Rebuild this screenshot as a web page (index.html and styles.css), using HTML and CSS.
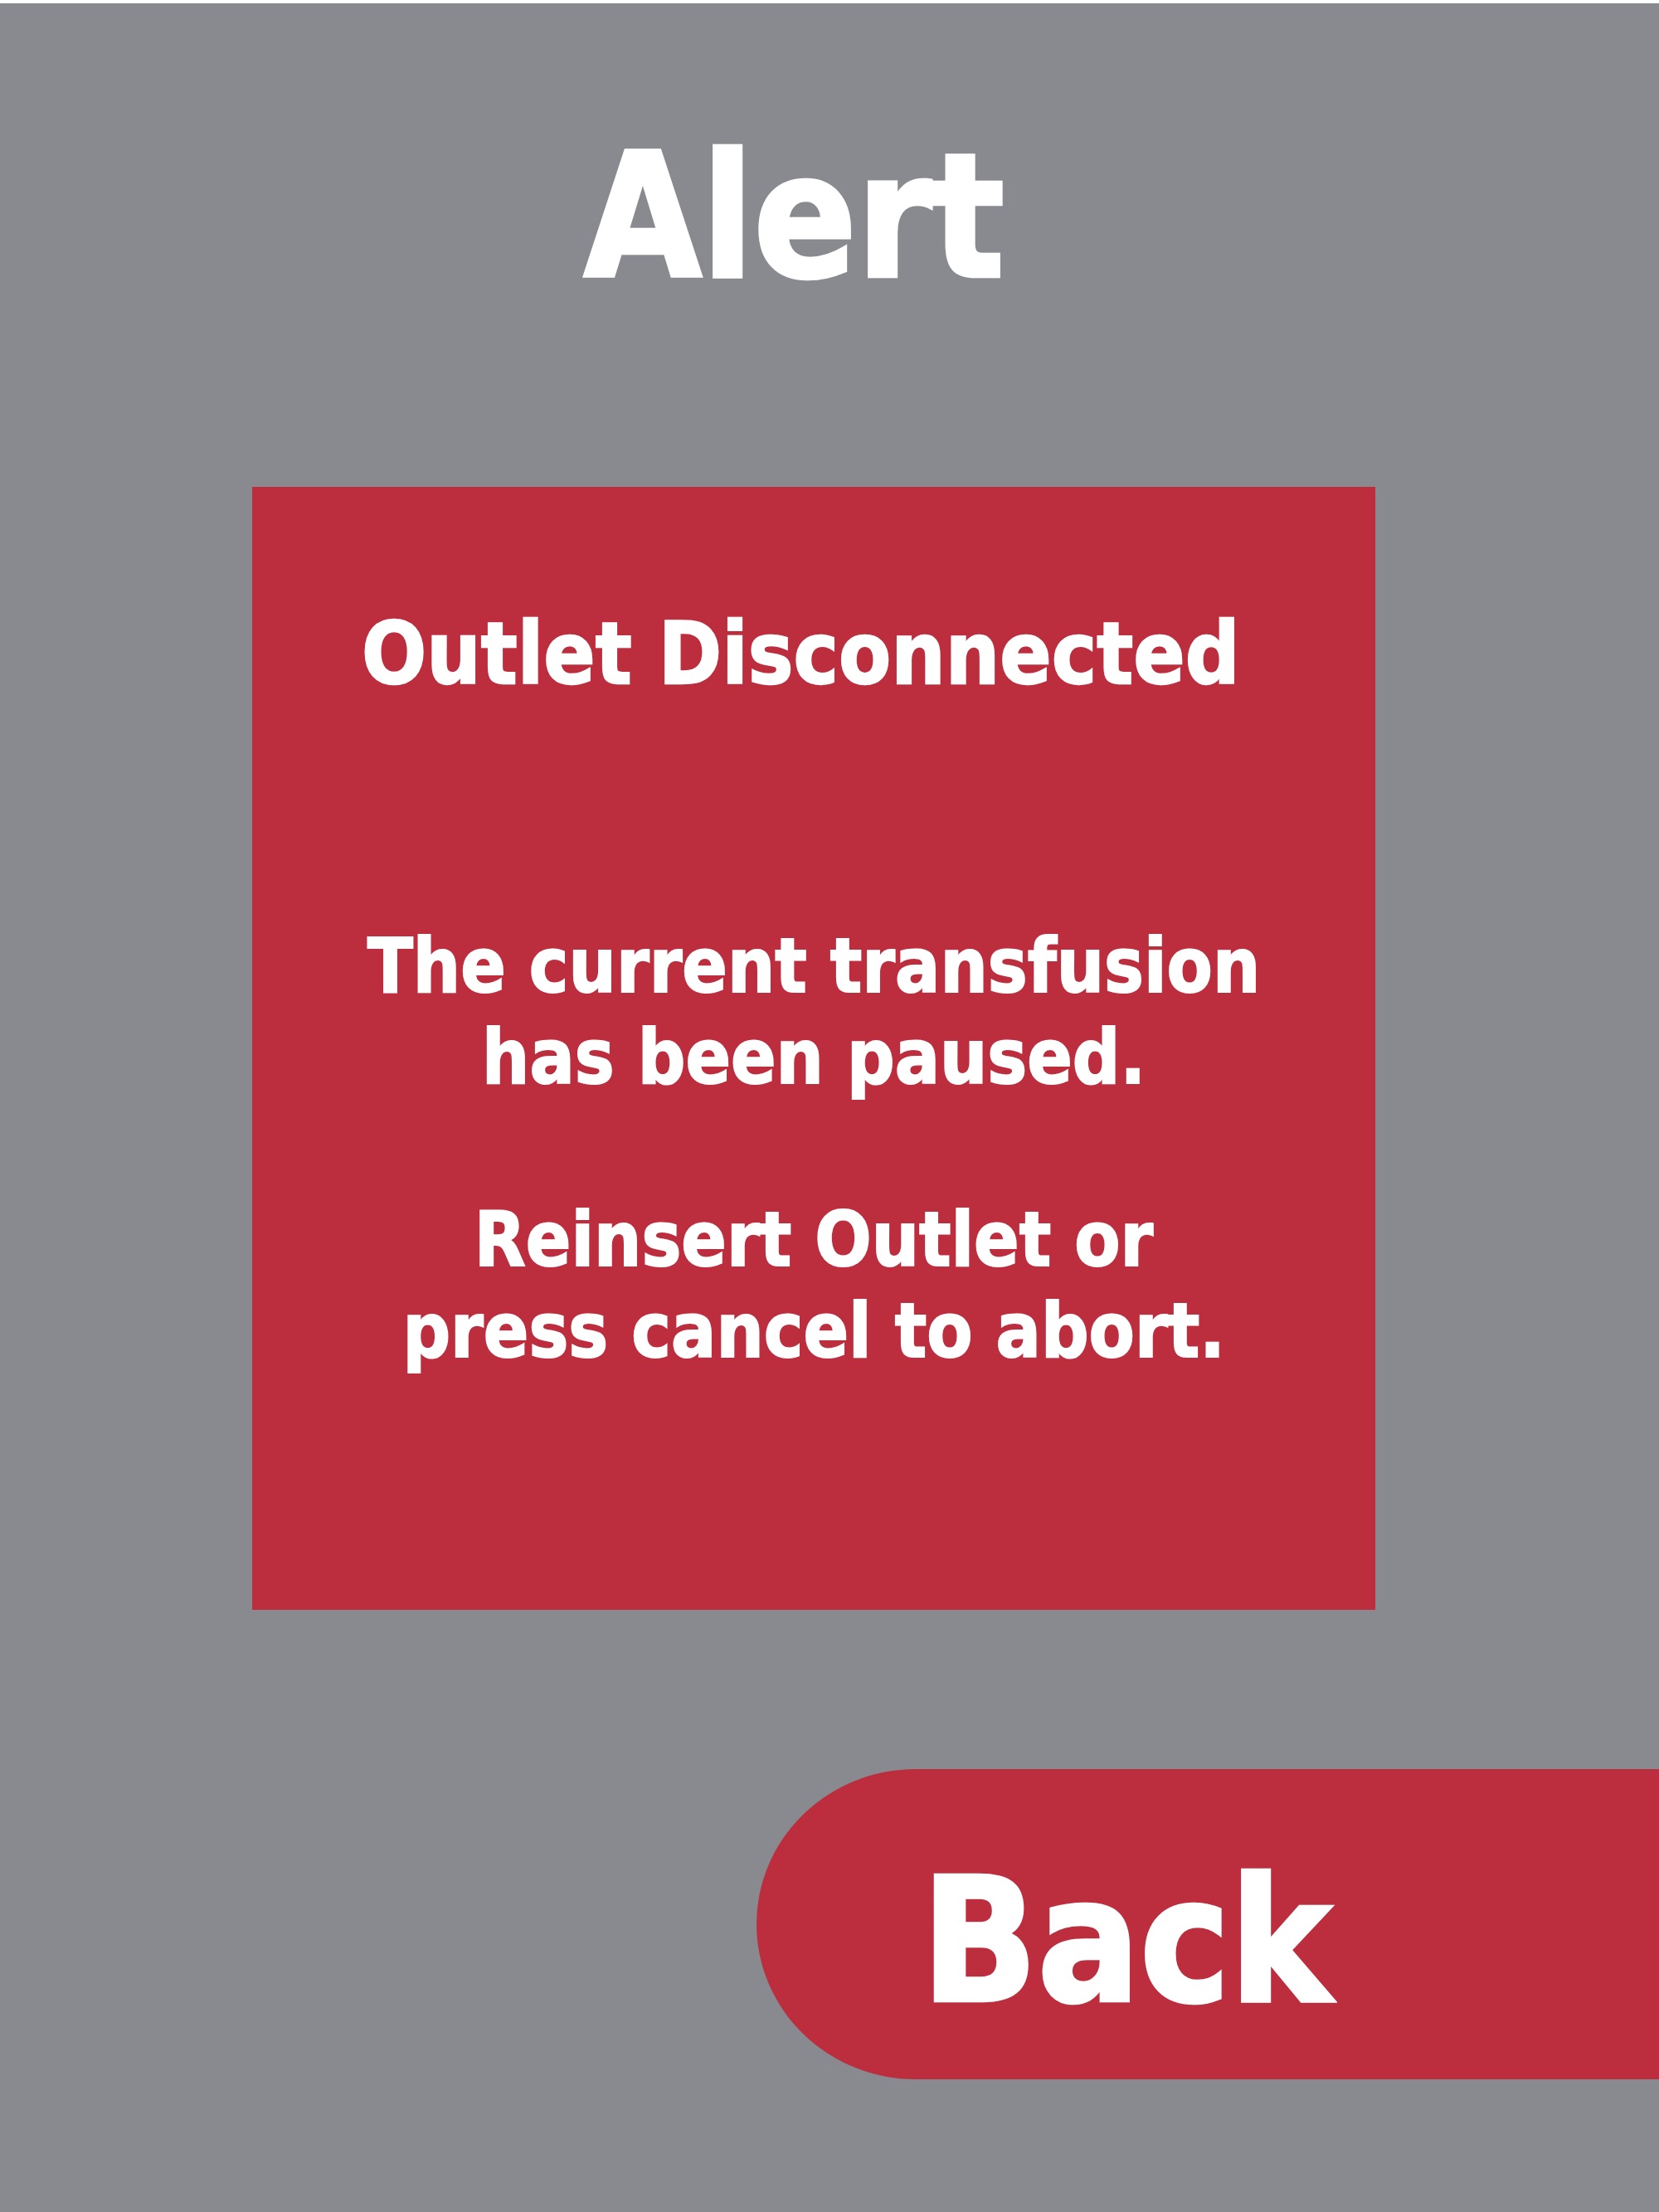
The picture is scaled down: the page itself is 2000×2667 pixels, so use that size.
FILE: index.html
```html
<!DOCTYPE html>
<html lang="en">
<head>
<meta charset="utf-8">
<title>Alert</title>
<link rel="stylesheet" href="styles.css">
</head>
<body>
<main class="screen">
  <header class="header">
    <h1 class="title"><span class="squeeze squeeze-left">Alert</span></h1>
  </header>
  <section class="alert-box">
    <h2 class="alert-heading"><span class="squeeze squeeze-left">Outlet Disconnected</span></h2>
    <div class="alert-body">
      <p class="squeeze">The current transfusion<br>has been paused.</p>
      <p class="squeeze">Reinsert Outlet or<br>press cancel to abort.</p>
    </div>
  </section>
  <div class="actions">
    <button class="back-btn" type="button"><span class="squeeze squeeze-left">Back</span></button>
  </div>
</main>
</body>
</html>
```
FILE: styles.css
```css
html, body {
  margin: 0;
  padding: 0;
  background: #ffffff;
}

.screen {
  margin-top: 4px;
  height: 2663px;
  background: #898a8f;
  font-family: "DejaVu Sans", "Liberation Sans", sans-serif;
  font-weight: bold;
  color: #ffffff;
  overflow: hidden;
  display: flex;
  flex-direction: column;
}

.squeeze {
  display: inline-block;
  white-space: nowrap;
  transform: scaleX(0.885);
  transform-origin: center top;
  -webkit-text-stroke: 0.022em #ffffff;
}

.squeeze-left {
  transform-origin: left top;
}

.header {
  height: 583px;
  box-sizing: border-box;
  padding: 137px 0 0 704px;
}

.title {
  margin: 0;
  font-size: 207px;
  line-height: 241px;
  font-weight: bold;
  white-space: nowrap;
}

.alert-box {
  margin-left: 304px;
  width: 1354px;
  height: 1354px;
  background: #bc2e3d;
  display: flex;
  flex-direction: column;
}

.alert-heading {
  margin: 141px 0 0 132px;
  font-size: 104px;
  line-height: 121px;
  font-weight: bold;
  white-space: nowrap;
}

.alert-body {
  margin-top: 261px;
  display: flex;
  flex-direction: column;
  align-items: center;
  gap: 110px;
}

.alert-body p {
  margin: 0;
  font-size: 91px;
  line-height: 110px;
  text-align: center;
}

.actions {
  margin-top: 192px;
  display: flex;
  justify-content: flex-end;
}

.back-btn {
  width: 1088px;
  height: 374px;
  box-sizing: border-box;
  border: 0;
  margin: 0;
  padding: 87px 0 0 199px;
  background: #bc2e3d;
  border-radius: 192px 0 0 192px / 187px 0 0 187px;
  color: #ffffff;
  font-family: inherit;
  font-weight: bold;
  font-size: 207px;
  line-height: 241px;
  text-align: left;
  display: flex;
  align-items: flex-start;
  cursor: pointer;
}
```
